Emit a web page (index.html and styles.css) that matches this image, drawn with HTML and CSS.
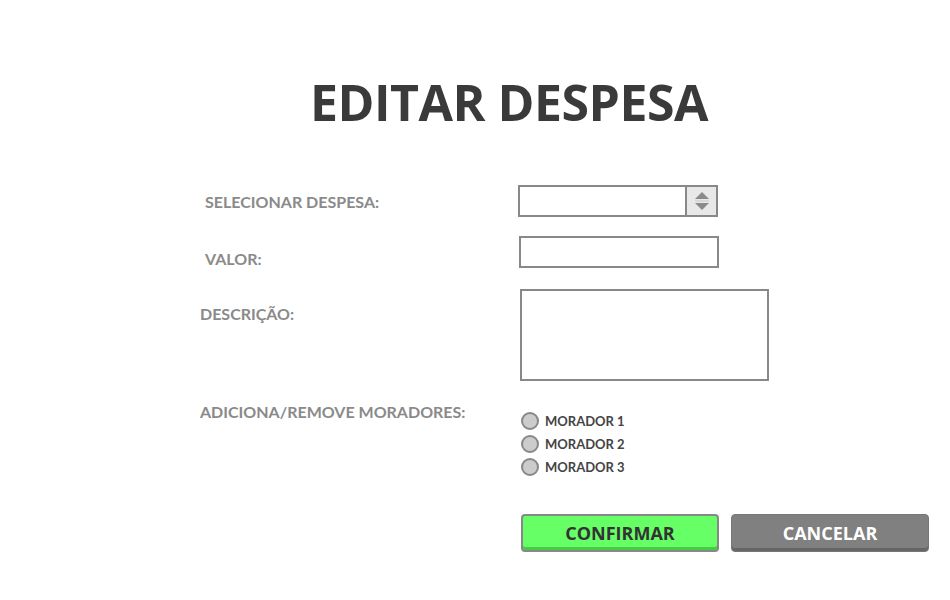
FILE: index.html
```html
<!DOCTYPE html>
<html lang="pt">
<head>
<meta charset="utf-8">
<title>Editar Despesa</title>
<link rel="stylesheet" href="styles.css">
</head>
<body>
<h1 class="title">EDITAR DESPESA</h1>
<form class="form">
  <div class="row row-select">
    <label class="label label-sel">SELECIONAR DESPESA:</label>
    <div class="select">
      <span class="select-value"></span>
      <span class="spinner">
        <svg width="16" height="22" viewBox="0 0 16 22"><path d="M1 9 L8 2 L15 9 Z" fill="#8a8a8a"/><rect x="1" y="10.5" width="14" height="1" fill="#8a8a8a" opacity="0.35"/><path d="M1 13 L8 20 L15 13 Z" fill="#8a8a8a"/></svg>
      </span>
    </div>
  </div>
  <div class="row row-valor">
    <label class="label label-valor">VALOR:</label>
    <div class="input input-valor"></div>
  </div>
  <div class="row row-desc">
    <label class="label label-desc">DESCRIÇÃO:</label>
    <div class="input textarea"></div>
  </div>
  <div class="row row-mor">
    <label class="label label-mor">ADICIONA/REMOVE MORADORES:</label>
    <ul class="radios">
      <li class="radio"><span class="dot"></span>MORADOR 1</li>
      <li class="radio"><span class="dot"></span>MORADOR 2</li>
      <li class="radio"><span class="dot"></span>MORADOR 3</li>
    </ul>
  </div>
  <div class="buttons">
    <button type="button" class="btn btn-ok">CONFIRMAR</button>
    <button type="button" class="btn btn-cancel">CANCELAR</button>
  </div>
</form>
</body>
</html>
```
FILE: styles.css
```css
html, body {
  margin: 0;
  padding: 0;
  background: #ffffff;
}
body {
  width: 950px;
  height: 600px;
  overflow: hidden;
  font-family: "Open Sans", "Lato", sans-serif;
}
.title {
  margin: 0;
  padding: 77px 0 0 68px;
  text-align: center;
  font-family: "Open Sans", sans-serif;
  font-weight: 700;
  font-size: 50px;
  line-height: 50px;
  color: #3a3a3a;
  letter-spacing: -0.5px;
}
.form {
  margin: 58px 0 0 200px;
  display: flex;
  flex-direction: column;
}
.row {
  display: grid;
  grid-template-columns: 318px auto;
  align-items: start;
}
.label {
  font-family: "Lato", sans-serif;
  font-weight: 700;
  font-size: 16px;
  line-height: 18px;
  color: #8a8a8a;
}
.label-sel { padding: 8px 0 0 5px; }
.select {
  width: 196px;
  height: 28px;
  border: 2px solid #888;
  display: flex;
  justify-content: flex-end;
}
.spinner {
  width: 29px;
  height: 28px;
  background: #e8e8e8;
  border-left: 2px solid #888;
  display: flex;
  align-items: center;
  justify-content: center;
}
.row-valor { margin-top: 19px; }
.label-valor { padding: 14px 0 0 5px; }
.input {
  border: 2px solid #888;
  background: #fff;
}
.input-valor {
  margin-left: 1px;
  width: 196px;
  height: 28px;
}
.row-desc { margin-top: 21px; }
.label-desc { padding: 16px 0 0 0; }
.textarea {
  margin-left: 2px;
  width: 245px;
  height: 88px;
}
.row-mor { margin-top: 20px; }
.label-mor { padding: 2px 0 0 0; }
.radios {
  list-style: none;
  margin: 11px 0 0 3px;
  padding: 0;
  display: flex;
  flex-direction: column;
  gap: 5px;
}
.radio {
  display: flex;
  align-items: center;
  gap: 6px;
  height: 18px;
  font-family: "Lato", sans-serif;
  font-weight: 700;
  font-size: 13px;
  color: #444;
}
.dot {
  width: 14px;
  height: 14px;
  border-radius: 50%;
  background: #cccccc;
  border: 2px solid #888;
}
.buttons {
  display: flex;
  gap: 12px;
  margin: 38px 0 0 321px;
}
.btn {
  width: 198px;
  height: 38px;
  border-radius: 4px;
  font-family: "Open Sans", sans-serif;
  font-weight: 700;
  font-size: 18px;
  padding: 0;
  cursor: pointer;
}
.btn-ok {
  background: #66ff66;
  color: #333;
  border: 2px solid #888;
  box-shadow: inset 0 -3px 0 #44cc44;
}
.btn-cancel {
  background: #808080;
  color: #fff;
  border: 1px solid #777;
  box-shadow: inset 0 -3px 0 #666;
}
```
